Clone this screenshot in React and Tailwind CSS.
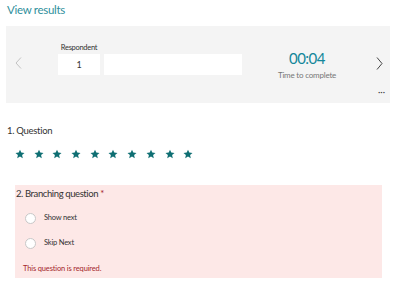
import React from 'react';

const FONT = { fontFamily: 'Lato, "Open Sans", sans-serif' };

function Star() {
  return (
    <svg width="10" height="10" viewBox="0 0 24 24" className="shrink-0">
      <path d="M12 1.5l3.1 7.1 7.7.7-5.8 5.1 1.7 7.6L12 18l-6.7 4 1.7-7.6-5.8-5.1 7.7-.7z" fill="#0f6f73" />
    </svg>
  );
}

function Radio({ label }) {
  return (
    <div className="flex items-center h-[12px]">
      <span className="w-[11px] h-[11px] rounded-full bg-white border border-[#c8c8c8] shrink-0" />
      <span className="ml-[8px] text-[7.5px] tracking-[-0.2px] text-[#333]">{label}</span>
    </div>
  );
}

export default function App() {
  return (
    <div className="w-[399px] h-[297px] bg-white overflow-hidden" style={FONT}>
      <div className="pl-[7px] pt-[1px] h-[26px] text-[11.5px] tracking-[-0.3px] leading-[18px] text-[#2f8f9c]">View results</div>

      {/* respondent navigator */}
      <div className="relative ml-[6px] w-[384px] h-[77px] bg-[#f4f4f4] flex items-start">
        <svg width="7" height="12" viewBox="0 0 7 12" className="ml-[9px] mt-[31px] shrink-0">
          <path d="M6 0.5L1 6l5 5.5" fill="none" stroke="#c2c2c2" strokeWidth="1" />
        </svg>
        <div className="ml-[36px] mt-[17px] flex flex-col items-center w-[42px]">
          <span className="text-[7.5px] tracking-[-0.3px] leading-[10px] text-[#333]">Respondent</span>
          <div className="mt-[1px] w-[42px] h-[21px] bg-white flex items-center justify-center text-[9px] text-[#333]">1</div>
        </div>
        <div className="ml-[4px] mt-[28px] w-[138px] h-[21px] bg-white" />
        <div className="ml-[32px] mt-[22px] w-[66px] flex flex-col items-center">
          <span className="text-[15px] tracking-[-0.5px] leading-[20px] text-[#13879a]">00:04</span>
          <span className="mt-[1px] text-[8px] tracking-[-0.2px] leading-[12px] text-[#777] whitespace-nowrap">Time to complete</span>
        </div>
        <svg width="7" height="13" viewBox="0 0 7 13" className="ml-[36px] mt-[31px] shrink-0">
          <path d="M1 0.5l5 6-5 6" fill="none" stroke="#444" strokeWidth="1" />
        </svg>
        <span className="absolute right-[5px] bottom-[7px] text-[9px] leading-[8px] text-[#444]">···</span>
      </div>

      <div className="pl-[7px] mt-[21px] text-[9.5px] tracking-[-0.3px] leading-[14px] text-[#333]">1. Question</div>
      <div className="ml-[15px] mt-[11px] flex gap-[8.7px]">
        {Array.from({ length: 10 }).map((_, i) => (
          <Star key={i} />
        ))}
      </div>

      {/* branching question */}
      <div className="ml-[15px] mt-[26px] w-[367px] h-[93px] bg-[#fde8e7] pl-[1px] pt-[2px]">
        <div className="text-[9.5px] tracking-[-0.4px] leading-[14px] text-[#333]">
          2. Branching question <span className="text-[#a4262c]">*</span>
        </div>
        <div className="ml-[9px] mt-[11px] flex flex-col gap-[13px]">
          <Radio label="Show next" />
          <Radio label="Skip Next" />
        </div>
        <div className="ml-[7px] mt-[15px] text-[7.5px] tracking-[-0.15px] leading-[10px] text-[#a4262c]">This question is required.</div>
      </div>
    </div>
  );
}
